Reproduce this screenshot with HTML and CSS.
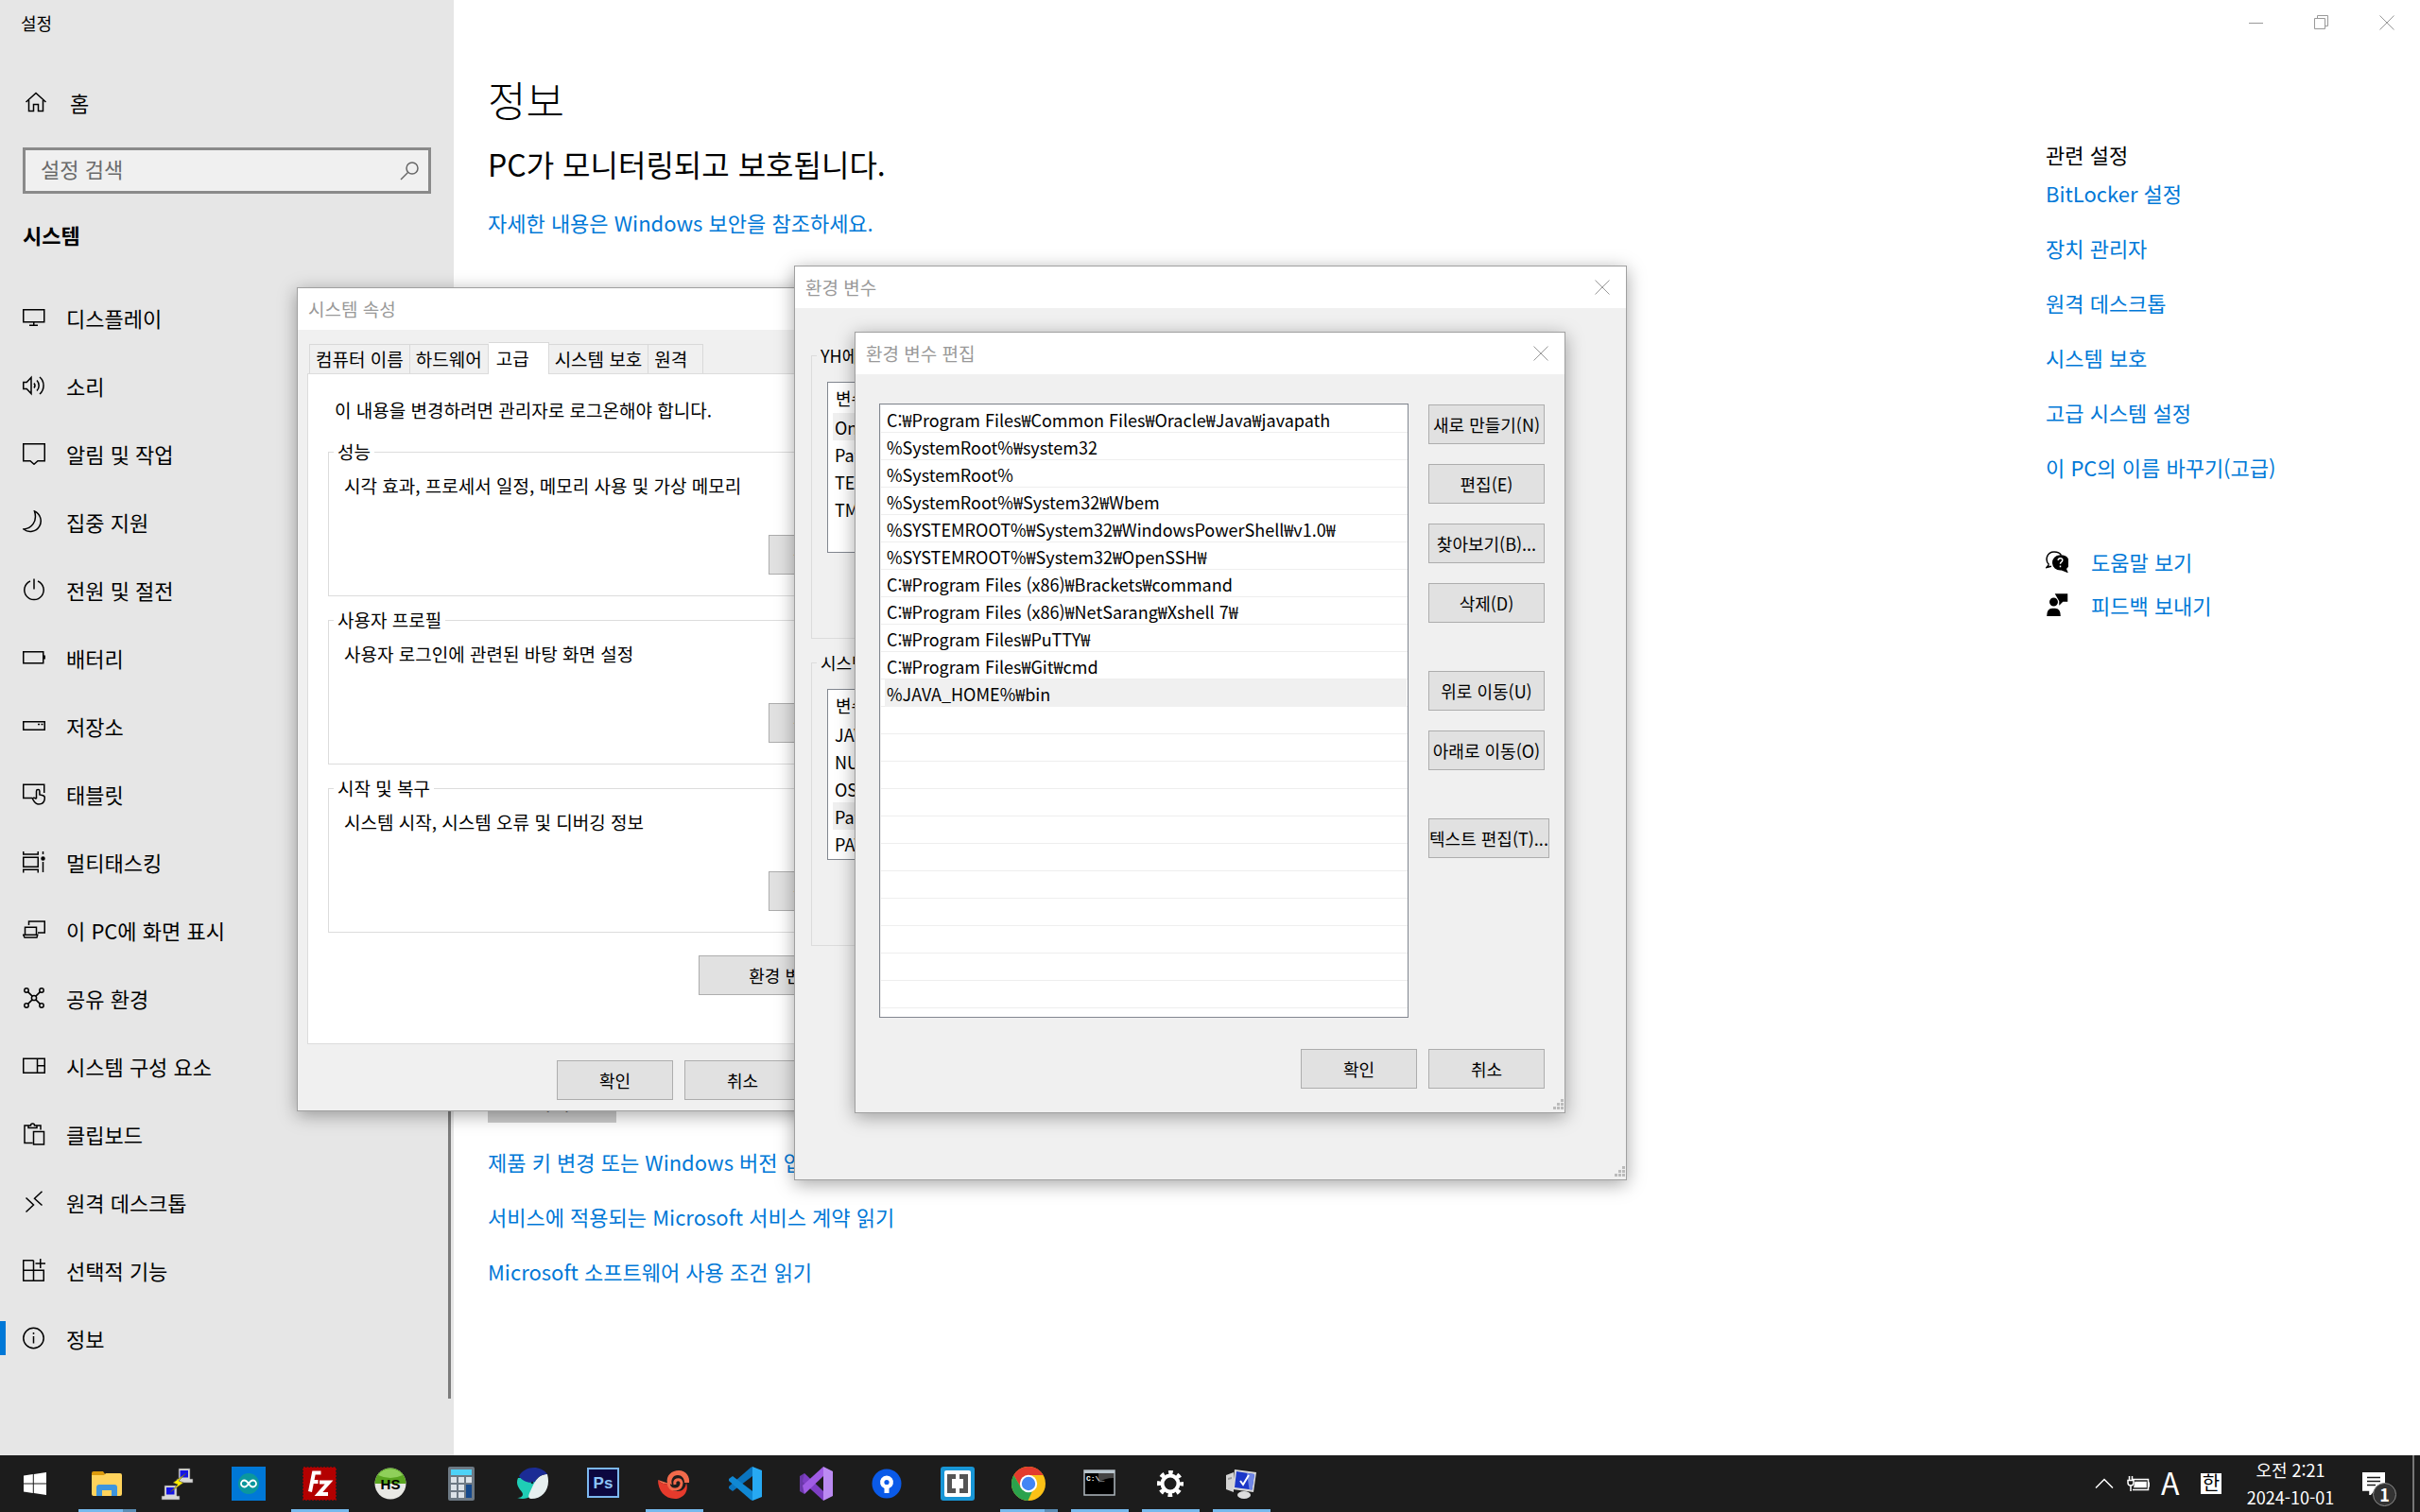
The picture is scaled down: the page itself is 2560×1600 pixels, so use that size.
FILE: index.html
```html
<!DOCTYPE html>
<html lang="ko">
	<head>
		<meta charset="utf-8">
		<title>설정</title>
		<link rel="stylesheet" href="styles.css">
	</head>
	<body>
		<div class="settings">
			<aside class="sidebar">
				<div class="app-name">설정</div>
				<a href="#" class="nav-item home">
					<svg class="icon" viewBox="0 0 24 24"><path d="M1.500 12L12 2.500 22.500 12M4.500 10v11.500h5V14.500h5v7h5V10"/></svg>
					홈
				</a>
				<label class="search">
					<input type="text" placeholder="설정 검색" aria-label="설정 검색">
					<svg class="icon search-icon" viewBox="0 0 24 24"><circle cx="15" cy="9" r="6"/><path d="M10.500 13.500L3 21"/></svg>
				</label>
				<h2 class="category">시스템</h2>
				<nav class="nav">
					<a href="#" class="nav-item"><svg class="icon" viewBox="0 0 24 24"><path d="M.75 3.750h22v13h-22zM11.750 17v3M7 20.200h9"/></svg>디스플레이</a>
					<a href="#" class="nav-item"><svg class="icon" viewBox="0 0 24 24"><path d="M.75 8.500h3.500L9 3.500v17l-4.750-5H.75zM12 9.500a4 4 0 0 1 0 5M15 6.500a8 8 0 0 1 0 11M18 3a12 12 0 0 1 0 18"/></svg>소리</a>
					<a href="#" class="nav-item"><svg class="icon" viewBox="0 0 24 24"><path d="M.75 1.750h22.500v18H16l-4 3.500-4-3.500H.75z"/></svg>알림 및 작업</a>
					<a href="#" class="nav-item"><svg class="icon" viewBox="0 0 24 24"><path d="M12.500 1a11.200 11.200 0 1 1-11.500 19C9 19.500 16 12 12.500 1z"/></svg>집중 지원</a>
					<a href="#" class="nav-item"><svg class="icon" viewBox="0 0 24 24"><path d="M8 3a10.200 10.200 0 1 0 8 0M12 .5v11"/></svg>전원 및 절전</a>
					<a href="#" class="nav-item"><svg class="icon" viewBox="0 0 24 24"><path d="M.75 5.750h21v12h-21zM23.200 9.500v4"/></svg>배터리</a>
					<a href="#" class="nav-item"><svg class="icon" viewBox="0 0 24 24"><path d="M.75 7.750h22.500v8.500H.75zM16 10.500h2M19.500 10.500h2"/></svg>저장소</a>
					<a href="#" class="nav-item"><svg class="icon" viewBox="0 0 24 24"><path d="M10 16.500H.75V2.250h22V11M14.500 17V9.200a1.700 1.700 0 0 1 3.400 0V13l3.500.8q2.200.6 1.900 3-.3 6.200-6.300 6.200-3.500 0-5.800-4.300l-.9-1.700q1.500-1.500 4.200.5"/></svg>태블릿</a>
					<a href="#" class="nav-item"><svg class="icon" viewBox="0 0 24 24"><path d="M.75 1v3h15.500V1M.75 7.250h15.500v10H.75zM.75 23.500v-3.250h15.500v3.250M21.500 1v3M21.500 12v11"/><circle cx="21.500" cy="8.500" r="1.500" fill="#000"/></svg>멀티태스킹</a>
					<a href="#" class="nav-item"><svg class="icon" viewBox="0 0 24 24"><path d="M6.500 7V3h16.750v12H16M2.500 17V9.250h12V17M.75 17.250h15L15 20H2z"/></svg>이 PC에 화면 표시</a>
					<a href="#" class="nav-item"><svg class="icon" viewBox="0 0 24 24"><circle cx="4" cy="4" r="2.200"/><circle cx="20" cy="4" r="2.200"/><circle cx="4" cy="20" r="2.200"/><circle cx="20" cy="20" r="2.200"/><circle cx="12" cy="12" r="2.600"/><path d="M5.600 5.600l4.500 4.500M18.400 5.600l-4.500 4.500M5.600 18.400l4.500-4.500M18.400 18.400l-4.500-4.500"/></svg>공유 환경</a>
					<a href="#" class="nav-item"><svg class="icon" viewBox="0 0 24 24"><path d="M.75 4.250h22.500v15H.75zM15.500 4.250v15M15.500 11.750h7.750"/></svg>시스템 구성 요소</a>
					<a href="#" class="nav-item"><svg class="icon" viewBox="0 0 24 24"><path d="M10.500 21.500H2V3h4M15 3h4v4.500M6 5.500V3h2.500a2 2 0 0 1 4 0H15v2.500zM11.500 9.500h11v13.500h-11z"/></svg>클립보드</a>
					<a href="#" class="nav-item"><svg class="icon" viewBox="0 0 24 24"><path d="M3.500 7.500l8 7.500-8 7.500M20.500.8l-8 7.500 8 7.200"/></svg>원격 데스크톱</a>
					<a href="#" class="nav-item"><svg class="icon" viewBox="0 0 24 24"><path d="M11.500 1.750H.75v21.500h21.500v-11H.75M11.500 1.750v21.500M18.750 0v10M13.500 5h10.500"/></svg>선택적 기능</a>
					<a href="#" class="nav-item current"><svg class="icon" viewBox="0 0 24 24"><circle cx="11.500" cy="12" r="10.700"/><path d="M11.500 6v2M11.500 10v7.500"/></svg>정보</a>
				</nav>
				<div class="scrollbar"></div>
			</aside>

			<main class="content">
				<div class="about">
					<h1>정보</h1>
					<p class="status">PC가 모니터링되고 보호됩니다.</p>
					<a href="#">자세한 내용은 Windows 보안을 참조하세요.</a>
					<button type="button" class="copy">복사</button>
					<a href="#">제품 키 변경 또는 Windows 버전 업그레이드</a>
					<a href="#">서비스에 적용되는 Microsoft 서비스 계약 읽기</a>
					<a href="#">Microsoft 소프트웨어 사용 조건 읽기</a>
				</div>
				<div class="related">
					<h3>관련 설정</h3>
					<a href="#">BitLocker 설정</a>
					<a href="#">장치 관리자</a>
					<a href="#">원격 데스크톱</a>
					<a href="#">시스템 보호</a>
					<a href="#">고급 시스템 설정</a>
					<a href="#">이 PC의 이름 바꾸기(고급)</a>
					<div class="support">
						<a href="#">
							<svg class="icon" viewBox="0 0 24 24"><path d="M3.500 15.500L1 18.500l5-1.200M3.500 15.500C-1 11 1 2 9 2q5.500 0 7.500 3.500"/><path d="M15.500 6c11 0 10 11.500 5.500 13.500l1.500 3.500-5.500-2.200C5 22 5 6 15.500 6z" fill="#000"/><path d="M13.200 11q.2-2.200 2.300-2.200 2.300 0 2.300 2 0 1.300-1.300 2-1 .6-1 2M15.500 16.500v1.800" stroke="#fff"/></svg>
							도움말 보기
						</a>
						<a href="#">
							<svg class="icon" viewBox="0 0 24 24"><path d="M11 1h11.500v7H18l-3 3V8z" fill="#000"/><circle cx="8.500" cy="9" r="3.700" fill="#000"/><path d="M2 23.500q0-7 5-7h3q5 0 5 7z" fill="#000"/></svg>
							피드백 보내기
						</a>
					</div>
				</div>
			</main>

			<div class="caption">
				<button type="button" aria-label="최소화"><svg viewBox="0 0 16 16"><path d="M0 8.500h15"/></svg></button>
				<button type="button" aria-label="이전 크기로 복원"><svg viewBox="0 0 16 16"><path d="M.5 3.500h11v11H.5zM3.500 3.500v-3h11v11h-3"/></svg></button>
				<button type="button" aria-label="닫기"><svg viewBox="0 0 16 16"><path d="M.5.5l15 15M15.500.5l-15 15"/></svg></button>
			</div>
		</div>

		<!-- 시스템 속성 -->
		<section class="window win-system">
			<header class="titlebar">시스템 속성</header>
			<div class="win-body">
				<div class="tabs" role="tablist">
					<button type="button" role="tab">컴퓨터 이름</button>
					<button type="button" role="tab">하드웨어</button>
					<button type="button" role="tab" aria-selected="true" class="active">고급</button>
					<button type="button" role="tab">시스템 보호</button>
					<button type="button" role="tab">원격</button>
				</div>
				<div class="tab-page">
					<p>이 내용을 변경하려면 관리자로 로그온해야 합니다.</p>
					<fieldset>
						<legend>성능</legend>
						<p>시각 효과, 프로세서 일정, 메모리 사용 및 가상 메모리</p>
						<button type="button" class="btn">설정(S)...</button>
					</fieldset>
					<fieldset>
						<legend>사용자 프로필</legend>
						<p>사용자 로그인에 관련된 바탕 화면 설정</p>
						<button type="button" class="btn">설정(E)...</button>
					</fieldset>
					<fieldset>
						<legend>시작 및 복구</legend>
						<p>시스템 시작, 시스템 오류 및 디버깅 정보</p>
						<button type="button" class="btn">설정(T)...</button>
					</fieldset>
					<button type="button" class="btn btn-env">환경 변수(N)...</button>
				</div>
				<div class="actions">
					<button type="button" class="btn">확인</button>
					<button type="button" class="btn">취소</button>
					<button type="button" class="btn">적용(A)</button>
				</div>
			</div>
		</section>

		<!-- 환경 변수 -->
		<section class="window win-env">
			<header class="titlebar">환경 변수
				<button type="button" class="close" aria-label="닫기"><svg viewBox="0 0 16 16"><path d="M.5.5l15 15M15.500.5l-15 15"/></svg></button>
			</header>
			<div class="win-body">
				<fieldset>
					<legend>YH에 대한 사용자 변수(U)</legend>
					<div class="vars">
						<table>
							<tr><th>변수</th></tr>
							<tr class="selected"><td>OneDrive</td></tr>
							<tr><td>Path</td></tr>
							<tr><td>TEMP</td></tr>
							<tr><td>TMP</td></tr>
						</table>
					</div>
				</fieldset>
				<fieldset>
					<legend>시스템 변수(S)</legend>
					<div class="vars">
						<table>
							<tr><th>변수</th></tr>
							<tr><td>JAVA_HOME</td></tr>
							<tr><td>NUMBER_OF_PROCESSORS</td></tr>
							<tr><td>OS</td></tr>
							<tr class="selected"><td>Path</td></tr>
							<tr><td>PATHEXT</td></tr>
						</table>
					</div>
				</fieldset>
			</div>
			<svg class="grip" viewBox="0 0 12 12"><path d="M8 0h3v3H8zM4 4h3v3H4zM8 4h3v3H8zM0 8h3v3H0zM4 8h3v3H4zM8 8h3v3H8z"/></svg>
		</section>

		<!-- 환경 변수 편집 -->
		<section class="window win-edit">
			<header class="titlebar">환경 변수 편집
				<button type="button" class="close" aria-label="닫기"><svg viewBox="0 0 16 16"><path d="M.5.5l15 15M15.500.5l-15 15"/></svg></button>
			</header>
			<div class="win-body">
				<div class="edit-area">
					<ul class="paths">
						<li>C:₩Program Files₩Common Files₩Oracle₩Java₩javapath</li>
						<li>%SystemRoot%₩system32</li>
						<li>%SystemRoot%</li>
						<li>%SystemRoot%₩System32₩Wbem</li>
						<li>%SYSTEMROOT%₩System32₩WindowsPowerShell₩v1.0₩</li>
						<li>%SYSTEMROOT%₩System32₩OpenSSH₩</li>
						<li>C:₩Program Files (x86)₩Brackets₩command</li>
						<li>C:₩Program Files (x86)₩NetSarang₩Xshell 7₩</li>
						<li>C:₩Program Files₩PuTTY₩</li>
						<li>C:₩Program Files₩Git₩cmd</li>
						<li class="selected">%JAVA_HOME%₩bin</li>
					</ul>
					<div class="edit-buttons">
						<button type="button" class="btn">새로 만들기(N)</button>
						<button type="button" class="btn">편집(E)</button>
						<button type="button" class="btn">찾아보기(B)...</button>
						<button type="button" class="btn">삭제(D)</button>
						<button type="button" class="btn apart">위로 이동(U)</button>
						<button type="button" class="btn">아래로 이동(O)</button>
						<button type="button" class="btn apart wide">텍스트 편집(T)...</button>
					</div>
				</div>
				<div class="actions">
					<button type="button" class="btn">확인</button>
					<button type="button" class="btn">취소</button>
				</div>
			</div>
			<svg class="grip" viewBox="0 0 12 12"><path d="M8 0h3v3H8zM4 4h3v3H4zM8 4h3v3H8zM0 8h3v3H0zM4 8h3v3H4zM8 8h3v3H8z"/></svg>
		</section>

		<footer class="taskbar">
			<div class="tasks">
				<button type="button" aria-label="시작"><svg viewBox="0 0 36 36"><path fill="#fff" d="M5 9.500l9.800-1.400v9.400H5zM15.800 8L29 6v11.500H15.800zM5 18.500h9.800v9.400L5 26.500zM15.800 18.500H29V30l-13.200-2z"/></svg></button>
				<button type="button" class="open many" aria-label="파일 탐색기"><svg viewBox="0 0 36 36"><path fill="#dc9a0c" d="M2 7q0-2 2-2h10l3 4v5H2z"/><path fill="#ffd35c" d="M2 9h13l2-2h15q2 0 2 2v20q0 2-2 2H4q-2 0-2-2z"/><path fill="#3e95dd" d="M7 31V22q0-3 3-3h16q3 0 3 3v9h-6v-6H13v6z"/></svg></button>
				<button type="button" aria-label="PuTTY"><svg viewBox="0 0 36 36"><path fill="#d8d8d8" stroke="#555" stroke-width=".6" d="M19 2h12v11h3v4H17v-4h2zM4 20h13v11h3v4H1v-4h3z"/><path fill="#1414e6" d="M20.500 4h8.500v7.500h-8.500zM6 22h8.500v7.500H6z"/><path fill="#ffee00" stroke="#444" stroke-width=".6" d="M27 7L13 17l5 2-8 8 14-10-5-2z"/></svg></button>
				<button type="button" aria-label="Arduino"><svg viewBox="0 0 36 36"><path fill="#0078d7" d="M0 0h36v36H0z"/><circle cx="18" cy="18" r="11" fill="#0b979d"/><path fill="none" stroke="#fff" stroke-width="1.800" d="M18 18c-2-3-3.500-3.500-4.500-3.500a3.500 3.500 0 0 0 0 7c1 0 2.500-.5 4.500-3.500s3.500-3.500 4.500-3.500a3.500 3.500 0 0 1 0 7c-1 0-2.500-.5-4.500-3.500z"/></svg></button>
				<button type="button" class="open" aria-label="FileZilla"><svg viewBox="0 0 36 36"><path fill="#b30000" stroke="#b30000" stroke-width="1.500" stroke-dasharray="2 1.500" d="M1 1h34v34H1z"/><path fill="none" stroke="#fff" stroke-width="4" d="M19.500 6.500h-7.500l-4 20M9.500 16h7M18 16.500h10L17 29h10"/></svg></button>
				<button type="button" aria-label="HeidiSQL"><svg viewBox="0 0 36 36"><circle cx="18" cy="18" r="16.500" fill="#e8e8e4"/><path fill="#59a520" d="M1.500 18a16.500 16.500 0 0 1 33 0z"/><path fill="#8fd05a" d="M5 9a16 16 0 0 1 26 0q-13 6-26 0z"/><text x="18" y="24" class="hs">HS</text></svg></button>
				<button type="button" aria-label="계산기"><svg viewBox="0 0 36 36"><rect x="4" width="28" height="36" rx="2" fill="#6d7984"/><path fill="#4dd2f7" d="M7 3h22v6H7z"/><path fill="#dbe2e8" d="M7 11h6v6H7zM15 11h6v6h-6zM23 11h6v6h-6zM7 19h6v6H7zM15 19h6v6h-6zM7 27h6v6H7zM15 27h6v6h-6z"/><path fill="#15498c" d="M23 19h6v14h-6z"/></svg></button>
				<button type="button" aria-label="Whale"><svg viewBox="0 0 36 36"><path fill="#1fcdb6" d="M3 12C-1 21 8 26 8 29c0 3-3 4-6 4 9 3 17-1 18-8l3-14z"/><path fill="#e6efef" d="M34 8c4 14-4 26-17 26-4 0-3-4-1-8C20 18 23 8 34 8z"/><path fill="#1b2c95" d="M4 10C9 0 26-3 34 8c-7 0-11 4-13 8-6 2-13 0-17-6z"/><circle cx="18" cy="17" r="1.300" fill="#123"/></svg></button>
				<button type="button" aria-label="Photoshop"><svg viewBox="0 0 36 36"><path fill="#0c0840" stroke="#7cb8f0" stroke-width="2" d="M2 2h32v30H2z"/><text x="18" y="23" class="ps">Ps</text></svg></button>
				<button type="button" class="open" aria-label="Nautilus"><svg viewBox="0 0 36 36"><path fill="#f26a4b" d="M1 14c2 3 6 5 10 4C9 9 16 4 23 4c8 0 12 7 11 13h-5c0-5-3-8-7-8-5 0-8 5-6 10z"/><path fill="#e53a2c" d="M1 14c0 11 7 20 18 20 9 0 15-8 12-17-1 6-4 9-9 9-8 0-8-5-11-8-4 1-8-1-10-4z"/><path fill="none" stroke="#f26a4b" stroke-width="3" d="M12 17q1 8 8 7 6-1 6-7-1-4-5-3-3 1-2 5"/></svg></button>
				<button type="button" aria-label="Visual Studio Code"><svg viewBox="0 0 36 36"><path fill="#0a74bf" d="M26 0v10L5 26l-4-3v-2L24 1z"/><path fill="#1088d4" d="M26 36V26L5 10l-4 3v2l23 20z"/><path fill="#27a9f3" d="M26 0l10 4v28l-10 4z"/></svg></button>
				<button type="button" aria-label="Visual Studio"><svg viewBox="0 0 36 36"><path fill="#6a38a8" d="M1 10l5-3v22l-5-3z"/><path fill="#7e3fc4" d="M6 7l20 19v10L4 16z"/><path fill="#a05ce4" d="M6 29L26 10V0L4 20z"/><path fill="#bb8af2" d="M26 0l10 5v26l-10 5z"/></svg></button>
				<button type="button" aria-label="Sourcetree"><svg viewBox="0 0 36 36"><circle cx="18" cy="18" r="15.500" fill="#0a5ae8"/><path fill="#fff" d="M15.500 28v-5a7 7 0 1 1 5 0v5z"/><circle cx="18" cy="16.500" r="2.600" fill="#0a5ae8"/></svg></button>
				<button type="button" aria-label="Brackets"><svg viewBox="0 0 36 36"><rect width="36" height="36" rx="3" fill="#1896d6"/><rect x="4" y="4" width="28" height="28" rx="2" fill="#fff"/><path fill="#555" d="M7 8h9v5h-4v10h4v5H7zM29 8h-9v5h4v10h-4v5h9z"/></svg></button>
				<button type="button" class="open many" aria-label="Chrome"><svg viewBox="0 0 36 36"><circle cx="18" cy="18" r="18" fill="#fbc116"/><path fill="#e33b2e" d="M2.400 9A18 18 0 0 1 33.600 9H18l-7.800 13.500z"/><path fill="#2ba24c" d="M2.400 9l7.800 13.500L18 27l4-1-4.500 10A18 18 0 0 1 2.400 9z"/><circle cx="18" cy="18" r="9.200" fill="#fff"/><circle cx="18" cy="18" r="7.200" fill="#4285f4"/></svg></button>
				<button type="button" class="open" aria-label="명령 프롬프트"><svg viewBox="0 0 36 36"><path stroke="#aeb8be" stroke-width="1.500" d="M2 4h32v26H2z"/><path fill="#b9c6ce" d="M2 4h32v3H2z"/><path fill="#444" d="M17 7h16v5q-10 0-16 5z"/><text x="4" y="15" class="cmd">C:\_</text></svg></button>
				<button type="button" class="open" aria-label="설정"><svg viewBox="0 0 36 36"><circle cx="18" cy="18" r="8.500" fill="none" stroke="#fff" stroke-width="4"/><circle cx="18" cy="18" r="12" fill="none" stroke="#fff" stroke-width="4" stroke-dasharray="4.700 4.725" stroke-dashoffset="2.300"/></svg></button>
				<button type="button" class="open" aria-label="시스템 속성"><svg viewBox="0 0 36 36"><path fill="#d4d4d4" d="M2 9l8-3v21l-8-3z"/><path fill="#999" d="M4 12l4-1v2l-4 1z"/><path fill="#d8d8d8" d="M11 3l23 3-3 21-22-3z"/><path fill="#1c38c8" d="M13 5l19 3-2.500 16.500L11 22z"/><path fill="#6f86e6" d="M24 6.700l8 1.300-2.500 16.500-3-.5z"/><path fill="none" stroke="#fff" stroke-width="2" d="M17 15l3 4 6-10"/><ellipse cx="21" cy="30" rx="7" ry="4" fill="#ddd"/></svg></button>
			</div>
			<div class="tray">
				<svg class="chevron" viewBox="0 0 20 12"><path d="M1 10.500L10 1.500l9 9"/></svg>
				<svg class="power" viewBox="0 0 24 18"><path d="M6 4.500h16.500v11H6M23.500 7.500v5M1 5.500h6v2.500q0 3-3 3t-3-3zM2.500 5V1M5.500 5V1M4 11v6"/><path d="M9 7.500h11v5H8z" fill="#fff"/></svg>
				<span class="ime">A</span>
				<span class="lang">한</span>
				<div class="clock"><span>오전 2:21</span><span>2024-10-01</span></div>
				<div class="notify">
					<svg viewBox="0 0 24 24"><path fill="#fff" d="M0 0h24v19H12l-4 5v-5H0z"/><path class="lines" d="M5 5.500h14M5 9.500h14M5 13.500h9"/></svg>
					<span class="badge">1</span>
				</div>
				<div class="show-desktop"></div>
			</div>
		</footer>
	</body>
</html>
```

FILE: styles.css
```css
*{ margin:0; padding:0; box-sizing:border-box;}
body{
	height:100vh;
	display:flex;
	flex-direction:column;
	position:relative;
	overflow:hidden;
	background:#fff;
	color:#000;
	font-family:"Noto Sans CJK KR",sans-serif;
	font-size:22px;
	line-height:30px;
}
a{ color:#0078d7; text-decoration:none;}
button,input{ font:inherit; color:inherit;}
svg{ display:block;}
.icon{
	flex:none;
	width:24px;
	height:24px;
	fill:none;
	stroke:#000;
	stroke-width:1.5;
}

/* settings app */
.settings{
	flex:1;
	display:flex;
	position:relative;
	min-height:0;
}
.sidebar{
	position:relative;
	flex:none;
	width:480px;
	background:#e6e6e6;
}
.app-name{
	padding:10px 22px 0;
	font-size:18px;
	line-height:28px;
}
.nav-item{
	display:flex;
	align-items:center;
	gap:22px;
	height:72px;
	padding-left:24px;
	color:#000;
}
.home{
	gap:24px;
	margin-top:34px;
	padding-left:26px;
}
.search{
	display:flex;
	align-items:center;
	height:49px;
	margin:12px 24px 0;
	padding:0 8px 0 16px;
	border:3px solid #8a8a8a;
	background:#f0f0f0;
}
.search input{
	flex:1;
	min-width:0;
	padding-bottom:6px;
	border:0;
	outline:0;
	background:none;
}
.search input::placeholder{ color:#6a6a6a; opacity:1;}
.search-icon{ stroke:#666;}
.category{
	margin:28px 24px 37px;
	font-size:22px;
	line-height:30px;
	font-weight:bold;
}
.current{ position:relative;}
.current::before{
	content:"";
	position:absolute;
	left:0;
	top:18px;
	width:6px;
	height:36px;
	background:#0078d7;
}
.scrollbar{
	position:absolute;
	top:306px;
	right:3px;
	bottom:60px;
	width:3px;
	background:#7c7c7c;
}
.content{
	flex:1;
	display:flex;
	justify-content:space-between;
	padding:75px 112px 0 36px;
}
.about,.related{
	display:flex;
	flex-direction:column;
	align-items:flex-start;
}
.about h1{
	font-size:44px;
	line-height:60px;
	font-weight:300;
}
.status{
	margin:18px 0 27px;
	font-size:32px;
	line-height:40px;
}
.about a{ margin-bottom:28px;}
.copy{
	width:136px;
	height:48px;
	margin:862px 0 26px;
	border:0;
	background:#ccc;
}
.related{
	width:284px;
	padding-top:73px;
}
.related h3{
	font-size:22px;
	font-weight:normal;
	line-height:30px;
	margin-bottom:11px;
}
.related a{ margin-bottom:28px; white-space:nowrap;}
.support{ margin-top:42px;}
.support a{
	display:flex;
	align-items:center;
	gap:24px;
	margin-bottom:16px;
}
.caption{
	position:absolute;
	top:0;
	right:1px;
	display:flex;
}
.caption button,.close{
	display:flex;
	align-items:center;
	justify-content:center;
	width:69px;
	height:48px;
	border:0;
	background:none;
}
.caption svg,.close svg{
	width:16px;
	height:16px;
	fill:none;
	stroke:#999;
}

/* classic dialogs */
.window{
	position:absolute;
	border:1px solid #a0a0a0;
	background:#f0f0f0;
	box-shadow:0 4px 18px rgba(0,0,0,.35);
	font-size:18px;
	line-height:24px;
}
.win-system{ left:314px; top:304px; width:682px; height:872px; font-size:19px;}
.win-env{ left:840px; top:281px; width:881px; height:968px;}
.win-edit{ left:904px; top:351px; width:752px; height:827px;}
.titlebar{
	display:flex;
	align-items:center;
	justify-content:space-between;
	height:44px;
	padding-left:11px;
	background:#fff;
	color:#999;
	font-size:19px;
}
.close{ width:50px; height:44px;}
.btn{
	width:123px;
	height:42px;
	border:1px solid #adadad;
	background:#e1e1e1;
	font-size:18px;
	white-space:nowrap;
}
.actions{
	display:flex;
	justify-content:flex-end;
	gap:12px;
}
.grip{
	position:absolute;
	right:0;
	bottom:2px;
	width:12px;
	height:12px;
	fill:#bbb;
}
.window fieldset{
	border:1px solid #dcdcdc;
	min-width:0;
}
.window legend{ padding:0 4px;}

.win-system .win-body{ padding:13px 13px 0 10px;}
.tabs{
	display:flex;
	align-items:flex-end;
	height:33px;
	padding-left:2px;
}
.tabs button{
	height:31px;
	padding:0 6px;
	border:1px solid #d9d9d9;
	border-left-width:0;
	border-bottom:0;
	background:#f0f0f0;
	text-align:left;
	line-height:28px;
}
.tabs button:first-child{ border-left-width:1px;}
.tabs .active{
	position:relative;
	height:34px;
	margin-bottom:-1px;
	padding:0 20px 2px 8px;
	background:#fff;
}
.tabs button:last-child{ padding-right:16px;}
.tab-page{
	display:flex;
	flex-direction:column;
	height:710px;
	padding:26px 10px 0 21px;
	border:1px solid #dcdcdc;
	background:#fff;
}
.tab-page > p{ padding-left:7px; margin-bottom:20px;}
.tab-page fieldset{
	display:flex;
	flex-direction:column;
	height:165px;
	margin-bottom:13px;
	padding:12px 34px 0 5px;
}
.tab-page fieldset p{ padding-left:11px; margin-bottom:40px;}
.tab-page fieldset .btn{ align-self:flex-end;}
.btn-env{
	align-self:flex-end;
	width:218px;
	margin:11px 14px 0 0;
}
.win-system .actions{ margin-top:17px;}

.win-env .win-body{ padding:38px 90px 0 17px;}
.win-env fieldset{
	height:312px;
	margin-bottom:13px;
	padding:16px 16px 0 5px;
}
.vars{
	height:181px;
	margin-left:11px;
	padding-left:5px;
	border:1px solid #828790;
	background:#fff;
}
.vars table{ width:100%; border-collapse:collapse;}
.vars th{
	height:32px;
	padding-left:3px;
	text-align:left;
	font-weight:normal;
}
.vars td{ height:29px; padding-left:2px;}
.selected{ background:#f0f0f0;}

.win-edit .win-body{ padding:31px 21px 0 25px;}
.edit-area{ display:flex; gap:21px;}
.paths{
	flex:1;
	height:650px;
	padding:1px;
	border:1px solid #828790;
	background:repeating-linear-gradient(#fff 0 28px,#eee 28px 29px) 1px 1px no-repeat;
	list-style:none;
}
.paths li{
	height:29px;
	margin-left:4px;
	padding-left:2px;
	line-height:31px;
	white-space:nowrap;
}
.edit-buttons{
	display:flex;
	flex-direction:column;
	gap:21px;
	width:123px;
	padding-top:1px;
}
.edit-buttons .apart{ margin-top:30px;}
.edit-buttons .wide{ width:128px;}
.win-edit .actions{ margin-top:33px;}

/* taskbar */
.taskbar{
	flex:none;
	display:flex;
	justify-content:space-between;
	height:60px;
	background:#1c1c1c;
	color:#fff;
}
.tasks{ display:flex;}
.tasks button{
	position:relative;
	display:flex;
	align-items:center;
	justify-content:center;
	width:75px;
	border:0;
	background:none;
}
.tasks svg{ width:36px; height:36px;}
.tasks .open::after{
	content:"";
	position:absolute;
	left:8px;
	right:6px;
	bottom:0;
	height:3px;
	background:#76b9ed;
}
.tasks .many::after{ background:linear-gradient(90deg,#76b9ed 47px,#5a8cb4 47px);}
.tasks text{ font-family:"Liberation Sans",sans-serif; font-weight:bold;}
.hs{ font-size:15px; text-anchor:middle;}
.ps{ font-size:17px; text-anchor:middle; fill:#8cc4f8;}
.tasks .cmd{ font-family:"Liberation Mono",monospace; font-size:8px; fill:#fff;}
.tray{
	display:flex;
	align-items:center;
}
.tray svg{ fill:none; stroke:#fff; stroke-width:1.5;}
.tray .lines{ stroke:#1c1c1c;}
.chevron{ width:20px; height:12px; margin-right:14px;}
.tray .power{ width:24px; height:18px; margin-right:12px;}
.ime{
	width:20px;
	margin-right:22px;
	padding-bottom:4px;
	font-size:32px;
}
.lang{
	width:22px;
	height:22px;
	margin-right:26px;
	background:#fff;
	color:#000;
	font-size:20px;
	line-height:20px;
	text-align:center;
}
.clock{
	display:flex;
	flex-direction:column;
	align-items:center;
	width:94px;
	margin-right:29px;
	font-size:18px;
	line-height:29px;
}
.notify{
	position:relative;
	width:24px;
	margin-right:29px;
}
.notify svg{ width:24px; height:24px;}
.badge{
	position:absolute;
	left:11px;
	top:11px;
	width:25px;
	height:25px;
	border:1px solid #8a8a8a;
	border-radius:50%;
	background:#333;
	font-size:18px;
	font-weight:bold;
	line-height:22px;
	text-align:center;
}
.show-desktop{
	width:8px;
	height:60px;
	border-left:2px solid #777;
}
```
